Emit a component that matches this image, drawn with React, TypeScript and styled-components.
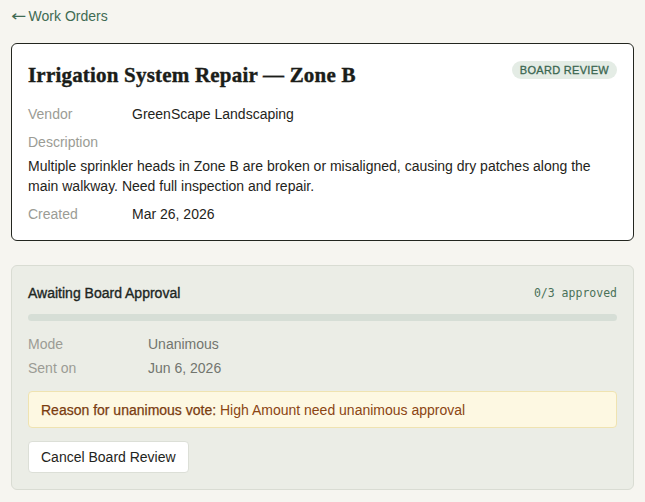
import React from 'react'
import styled, { createGlobalStyle } from 'styled-components'

const GlobalStyle = createGlobalStyle`
  html, body {
    margin: 0;
    padding: 0;
    background: #f6f5f0;
  }
  body {
    font-family: "Liberation Sans", Arial, sans-serif;
    color: #1f2420;
  }
`

const Page = styled.div`
  padding: 6px 11px 12px 11px;
  display: flex;
  flex-direction: column;
`

const BackLink = styled.a`
  display: flex;
  align-items: center;
  gap: 2px;
  color: #3f6b53;
  font-size: 14px;
  line-height: 20px;
  text-decoration: none;
  margin-bottom: 17px;
`

const Arrow = styled.span`
  font-family: "DejaVu Sans", sans-serif;
  font-size: 15px;
  transform: scaleX(1.2);
  transform-origin: left center;
  margin-right: 3px;
`

const Card = styled.section`
  background: #ffffff;
  border: 1px solid #23261f;
  border-radius: 6px;
  padding: 15px 16px 12px 16px;
  display: flex;
  flex-direction: column;
`

const Header = styled.div`
  display: flex;
  justify-content: space-between;
  align-items: flex-start;
  margin-bottom: 11px;
`

const Title = styled.h1`
  margin: 2px 0 0 0;
  font-family: "Liberation Serif", "Times New Roman", serif;
  font-weight: 700;
  font-size: 21px;
  line-height: 28px;
  letter-spacing: 0.2px;
  -webkit-text-stroke: 0.4px #1b1d19;
  color: #1b1d19;
`

const Badge = styled.span`
  margin-top: 2px;
  background: #e4ece5;
  color: #3a6650;
  font-size: 11px;
  font-weight: 400;
  -webkit-text-stroke: 0.3px #3a6650;
  letter-spacing: 0.3px;
  line-height: 18px;
  padding: 0 8px;
  border-radius: 9px;
  text-transform: uppercase;
`

const Row = styled.div<{ $labelWidth: number; $gap: number }>`
  display: grid;
  grid-template-columns: ${(p) => p.$labelWidth}px 1fr;
  font-size: 14px;
  line-height: 20px;
  padding: ${(p) => p.$gap}px 0;
`

const Label = styled.span`
  color: #9b9c95;
`

const Value = styled.span<{ $muted?: boolean }>`
  color: ${(p) => (p.$muted ? '#72756e' : '#1f2420')};
`

const Description = styled.p`
  margin: 0;
  font-size: 14px;
  line-height: 20px;
  color: #1f2420;
  padding-bottom: 4px;
`

const ReviewCard = styled.section`
  margin-top: 24px;
  background: #ebede6;
  border: 1px solid #d9dcd3;
  border-radius: 6px;
  padding: 17px 16px 16px 16px;
  display: flex;
  flex-direction: column;
`

const ReviewHeader = styled.div`
  display: flex;
  justify-content: space-between;
  align-items: center;
`

const ReviewTitle = styled.h2`
  margin: 0;
  font-size: 14px;
  line-height: 20px;
  font-weight: 400;
  -webkit-text-stroke: 0.35px #20261f;
  color: #20261f;
`

const Count = styled.span`
  font-family: "DejaVu Sans Mono", "Liberation Mono", monospace;
  font-size: 11.5px;
  color: #4a7158;
`

const Progress = styled.div`
  margin: 11px 0 11px 0;
  height: 7px;
  border-radius: 4px;
  background: #d6ded6;
  overflow: hidden;
`

const Fill = styled.div`
  height: 100%;
  background: #3f6b53;
`

const Notice = styled.div`
  margin-top: 11px;
  background: #fdf8e2;
  border: 1px solid #efe3b1;
  border-radius: 4px;
  padding: 8px 12px 7px 12px;
  font-size: 14px;
  line-height: 20px;
  color: #8b4513;
`

const NoticeLabel = styled.span`
  -webkit-text-stroke: 0.25px #7a3c10;
  color: #7a3c10;
`

const Actions = styled.div`
  margin-top: 13px;
  display: flex;
`

const Button = styled.button`
  background: #ffffff;
  border: 1px solid #dcdfd7;
  border-radius: 4px;
  font-family: "Liberation Sans", Arial, sans-serif;
  font-size: 14px;
  color: #1f2420;
  padding: 0 12px;
  height: 32px;
  cursor: pointer;
`

const App = () => {
  const approved = 0
  const total = 3

  return (
    <>
      <GlobalStyle />
      <Page>
        <BackLink href="#">
          <Arrow>←</Arrow>Work Orders
        </BackLink>

        <Card>
          <Header>
            <Title>Irrigation System Repair — Zone B</Title>
            <Badge>Board Review</Badge>
          </Header>
          <Row $labelWidth={104} $gap={4}>
            <Label>Vendor</Label>
            <Value>GreenScape Landscaping</Value>
          </Row>
          <Row $labelWidth={104} $gap={4}>
            <Label>Description</Label>
          </Row>
          <Description>
            Multiple sprinkler heads in Zone B are broken or misaligned, causing dry patches along the
            main walkway. Need full inspection and repair.
          </Description>
          <Row $labelWidth={104} $gap={4}>
            <Label>Created</Label>
            <Value>Mar 26, 2026</Value>
          </Row>
        </Card>

        <ReviewCard>
          <ReviewHeader>
            <ReviewTitle>Awaiting Board Approval</ReviewTitle>
            <Count>
              {approved}/{total} approved
            </Count>
          </ReviewHeader>
          <Progress>
            <Fill style={{ width: `${(approved / total) * 100}%` }} />
          </Progress>
          <Row $labelWidth={120} $gap={2}>
            <Label>Mode</Label>
            <Value $muted>Unanimous</Value>
          </Row>
          <Row $labelWidth={120} $gap={2}>
            <Label>Sent on</Label>
            <Value $muted>Jun 6, 2026</Value>
          </Row>
          <Notice>
            <NoticeLabel>Reason for unanimous vote:</NoticeLabel> High Amount need unanimous approval
          </Notice>
          <Actions>
            <Button>Cancel Board Review</Button>
          </Actions>
        </ReviewCard>
      </Page>
    </>
  )
}

export default App
